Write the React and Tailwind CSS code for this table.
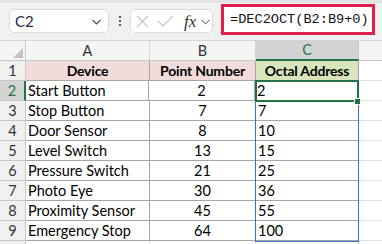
import React from "react";

const rows = [
  ["Start Button", "2", "2"],
  ["Stop Button", "7", "7"],
  ["Door Sensor", "8", "10"],
  ["Level Switch", "13", "15"],
  ["Pressure Switch", "21", "25"],
  ["Photo Eye", "30", "36"],
  ["Proximity Sensor", "45", "55"],
  ["Emergency Stop", "64", "100"],
];

const cellFont = { fontFamily: "Lato, 'Liberation Sans', sans-serif" };

export default function App() {
  return (
    <div className="w-[382px] h-[244px] overflow-hidden bg-white text-black" style={cellFont}>
      {/* toolbar */}
      <div className="h-[3px] bg-[#e4e4e4]" />
      <div className="h-[38px] bg-[#f0f0f0] border-b border-[#d4d4d4] flex items-start">
        <div className="ml-[9px] mt-[6px] w-[100px] h-[24px] bg-white rounded-[5px] border border-[#dcdcdc] flex items-center justify-between pl-[5px] pr-[7px]">
          <span className="text-[15px] text-[#1f2a44] leading-none">C2</span>
          <svg width="9" height="6" viewBox="0 0 9 6" className="mt-[1px]">
            <polyline points="0.5,0.8 4.5,4.8 8.5,0.8" fill="none" stroke="#444" strokeWidth="1.2" />
          </svg>
        </div>
        <div className="ml-[10px] mt-[13px] flex flex-col gap-[2px]">
          <div className="w-[2px] h-[2px] bg-[#555]" />
          <div className="w-[2px] h-[2px] bg-[#555]" />
          <div className="w-[2px] h-[2px] bg-[#555]" />
        </div>
        <div className="ml-[9px] mt-[6px] w-[83px] h-[24px] bg-white rounded-[5px] border border-[#dcdcdc] flex items-center pl-[5px]">
          <svg width="13" height="13" viewBox="0 0 13 13">
            <path d="M1 1 L12 12 M12 1 L1 12" stroke="#c4c4c4" strokeWidth="1.1" fill="none" />
          </svg>
          <svg width="17" height="12" viewBox="0 0 17 12" className="ml-[8px]">
            <polyline points="1,6 6,11 16,1" stroke="#c4c4c4" strokeWidth="1.1" fill="none" />
          </svg>
          <span className="ml-[10px] italic text-[17px] leading-none text-[#333]" style={{ fontFamily: "'Liberation Serif', serif" }}>
            fx
          </span>
          <svg width="9" height="6" viewBox="0 0 9 6" className="ml-[5px] mt-[2px]">
            <polyline points="0.5,0.8 4.5,4.8 8.5,0.8" fill="none" stroke="#777" strokeWidth="1.1" />
          </svg>
        </div>
        <div className="ml-[8px] mt-[1px] w-[154px] h-[31px] bg-white border-[3px] border-[#e3204c] flex items-center pl-[6px]">
          <span className="text-[13.6px] leading-none text-[#111]" style={{ fontFamily: "'Liberation Mono', monospace" }}>
            =DEC2OCT(B2:B9+0)
          </span>
        </div>
      </div>

      {/* sheet */}
      <div className="relative">
        {/* column header row */}
        <div className="flex h-[20px] bg-[#f5f5f5] border-b border-[#c8c8c8] text-[14.5px] text-[#333]">
          <div className="w-[26px] border-r border-[#c8c8c8] relative">
            <div className="absolute right-[2px] bottom-[2px] w-0 h-0 border-l-[10px] border-l-transparent border-b-[10px] border-b-[#c2c2c2]" />
          </div>
          <div className="w-[124px] border-r border-[#d4d4d4] flex items-center justify-center">A</div>
          <div className="w-[106px] border-r border-[#d4d4d4] flex items-center justify-center">B</div>
          <div className="w-[103px] bg-[#d3d3d3] border-r border-[#c8c8c8] border-b-2 border-b-[#217346] -mb-px flex items-center justify-center text-[#217346]">
            C
          </div>
          <div className="flex-1" />
        </div>

        {/* row 1 */}
        <div className="flex h-[20px] text-[14.5px]">
          <div className="w-[26px] bg-[#f0f0f0] border-r border-b border-[#c8c8c8] flex items-center justify-center text-[#333]">1</div>
          <div className="w-[124px] bg-[#f2dcdb] border-r border-b border-[#a6a6a6] flex items-center justify-center font-bold text-[14px] tracking-[-0.2px]">Device</div>
          <div className="w-[106px] bg-[#f2dcdb] border-r border-b border-[#a6a6a6] flex items-center justify-center font-bold text-[14px] tracking-[-0.2px]">Point Number</div>
          <div className="w-[103px] bg-[#d8e4bc] border-r border-b border-[#a6a6a6] flex items-center justify-center font-bold text-[14px] tracking-[-0.2px]">Octal Address</div>
          <div className="flex-1 border-b border-[#e1e1e1]" />
        </div>

        {rows.map((r, i) => {
          const active = i === 0;
          return (
            <div key={i} className="flex h-[20px] text-[14.5px]">
              <div
                className={
                  active
                    ? "w-[26px] bg-[#d3d3d3] border-r-2 border-r-[#217346] border-b border-b-[#c8c8c8] flex items-center justify-center text-[#217346]"
                    : "w-[26px] bg-[#f0f0f0] border-r border-b border-[#c8c8c8] flex items-center justify-center text-[#333]"
                }
              >
                {i + 2}
              </div>
              <div className={active ? "w-[123px] border-r border-b border-[#a6a6a6] flex items-center pl-[2px]" : "w-[124px] border-r border-b border-[#a6a6a6] flex items-center pl-[2px]"}>
                {r[0]}
              </div>
              <div className="w-[106px] border-r border-b border-[#a6a6a6] flex items-center justify-center">{r[1]}</div>
              <div className="w-[103px] border-r border-b border-[#a6a6a6] flex items-center pl-[2px]">{r[2]}</div>
              <div className="flex-1 border-b border-[#e1e1e1]" />
            </div>
          );
        })}
        <div className="flex h-[20px]">
          <div className="w-[26px] bg-[#f0f0f0] border-r border-[#c8c8c8]" />
          <div className="w-[124px] border-r border-[#e1e1e1]" />
          <div className="w-[106px] border-r border-[#e1e1e1]" />
          <div className="w-[103px] border-r border-[#e1e1e1]" />
        </div>

        {/* spill range outline C2:C9 */}
        <div className="absolute left-[255px] top-[40px] w-[104px] h-[161px] border border-[#3f6fc6] pointer-events-none" />
        {/* active cell C2 */}
        <div className="absolute left-[255px] top-[39px] w-[104px] h-[22px] border-2 border-[#217346] pointer-events-none" />
        <div className="absolute left-[354px] top-[57px] w-[7px] h-[7px] bg-[#217346] border border-white pointer-events-none" />
      </div>
    </div>
  );
}
